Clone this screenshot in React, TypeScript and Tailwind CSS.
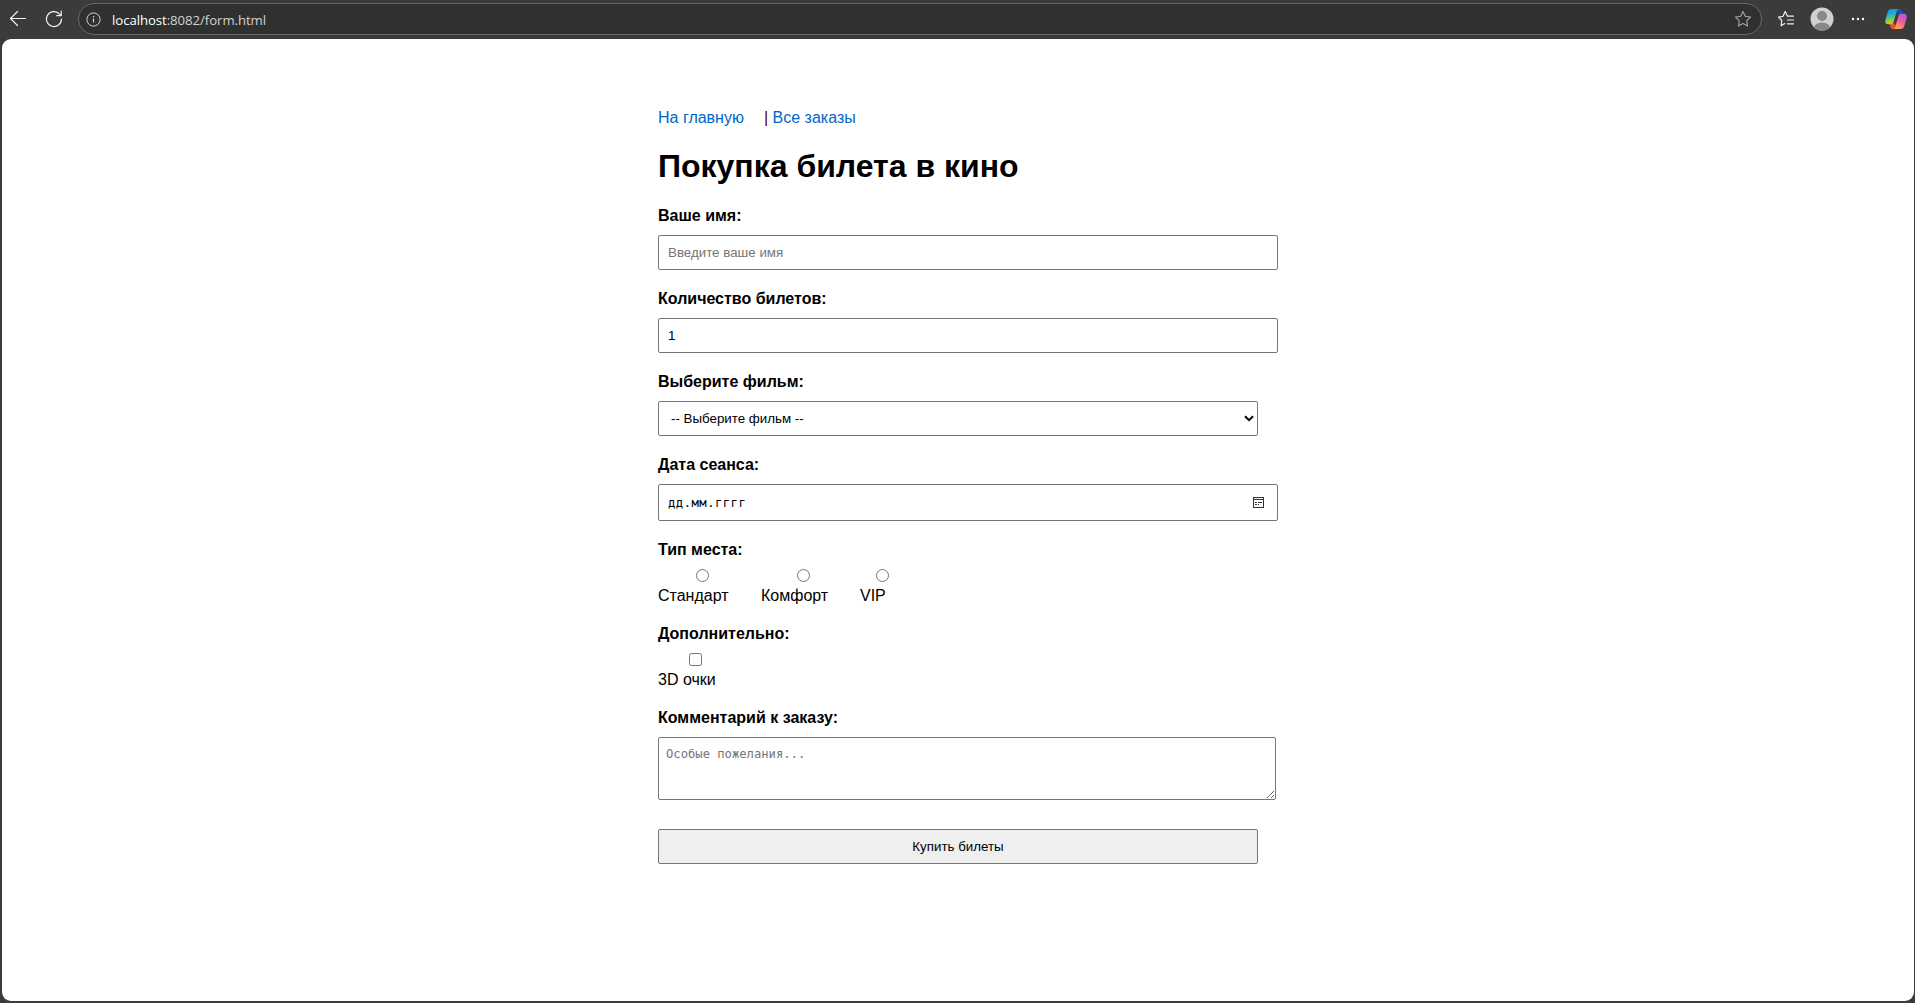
import type { ReactNode } from "react";

const inputBox =
  "block h-[35px] w-[620px] appearance-none rounded-[2px] border border-[#767676] bg-white px-[9px] text-[13.333px] text-black outline-none placeholder:text-[#757575]";

function Field({ label, children, className = "mb-5" }: { label: string; children: ReactNode; className?: string }) {
  return (
    <div className={className}>
      <div className="mb-2.5 h-[18px] font-bold">{label}</div>
      {children}
    </div>
  );
}

function Choice({ text, type, indent, className = "" }: { text: string; type: "radio" | "checkbox"; indent: string; className?: string }) {
  const shape = type === "radio" ? "rounded-full" : "rounded-[2.5px]";
  return (
    <label className={`flex flex-col gap-[5px] ${className}`}>
      <span className={`flex ${indent}`}>
        <input type={type} name="option" className={`size-[13px] appearance-none border border-[#767676] bg-white ${shape}`} />
      </span>
      <span className="h-[18px] whitespace-nowrap">{text}</span>
    </label>
  );
}

function CopilotIcon() {
  return (
    <svg width="24" height="24" viewBox="0 0 24 24" className="shrink-0">
      <defs>
        <linearGradient id="cpLeft" x1="0.3" y1="0" x2="0.5" y2="1">
          <stop offset="0" stopColor="#1c8de8" />
          <stop offset="0.4" stopColor="#25b5c4" />
          <stop offset="0.72" stopColor="#8ccb3f" />
          <stop offset="1" stopColor="#f2c21c" />
        </linearGradient>
        <linearGradient id="cpRight" x1="0.8" y1="0" x2="0.3" y2="1">
          <stop offset="0" stopColor="#a55bea" />
          <stop offset="0.45" stopColor="#ee5a9b" />
          <stop offset="1" stopColor="#ffa04f" />
        </linearGradient>
      </defs>
      <path d="M12 2h4c1.500 0 2 .8 2.400 2l1 3.500H14z" fill="#174fc0" />
      <path d="M12 22H9c-1.500 0-2.200-.8-2.600-2l-.8-3.500H11z" fill="#e8502f" />
      <path d="M7.500 2H15c-1.200 0-1.900 1-2.300 2.300L9.600 15c-.5 1.500-1.400 2.300-3 2.300H4.200C1.800 17.300.7 15.500 1.300 13L3.700 5C4.300 3 5.500 2 7.500 2z" fill="url(#cpLeft)" />
      <path d="M16.500 22H9c1.200 0 1.900-1 2.300-2.300L14.400 9c.5-1.500 1.400-2.300 3-2.300h2.400c2.400 0 3.500 1.800 2.900 4.300L20.300 19c-.6 2-1.800 3-3.800 3z" fill="url(#cpRight)" />
    </svg>
  );
}

function BrowserBar() {
  return (
    <header className="flex h-[39px] shrink-0 items-start bg-[#3b3b3b] text-white">
      <svg className="mt-[10px] ml-[9px] shrink-0" width="18" height="18" viewBox="0 0 18 18" fill="none" stroke="#f0f0f0" strokeWidth="1.2" strokeLinecap="round" strokeLinejoin="round">
        <path d="M16.500 8.500H1.500M8.500 1.500l-7 7 7 7" />
      </svg>
      <svg className="mt-[10px] ml-[18px] shrink-0" width="18" height="18" viewBox="0 0 18 18" fill="none" stroke="#f0f0f0" strokeWidth="1.2" strokeLinecap="round" strokeLinejoin="round">
        <path d="M16.500 9A7.500 7.500 0 1 1 14.800 4.300L16 5.500M16.200 1.200v4.500h-4.500" />
      </svg>
      <div className="mt-[3px] ml-[15px] flex h-8 w-[1684px] shrink-0 items-center rounded-full border border-[#676767] bg-[#303030] pl-[7px]">
        <svg width="15" height="15" viewBox="0 0 15 15" fill="none" stroke="#d0d0d0" className="shrink-0">
          <circle cx="7.500" cy="7.500" r="6.600" />
          <path d="M7.500 6.500v4" strokeWidth="1.200" />
          <path d="M7.500 4v1.300" strokeWidth="1.300" />
        </svg>
        <div className="mt-0.5 ml-[11px] h-[18px] w-[160px] font-['Open_Sans',sans-serif] text-[13.2px] leading-[18px] tracking-[-0.06px] whitespace-nowrap text-white">
          localhost<span className="text-[#d2d2d2]">:8082/form.html</span>
        </div>
        <svg className="mr-[9px] ml-auto shrink-0" width="18" height="18" viewBox="0 0 18 18" fill="none" stroke="#a5a5a5" strokeWidth="1.1" strokeLinejoin="round">
          <path d="M9 1.500l2.300 4.800 5.200.7-3.800 3.700.9 5.300L9 13.500 4.400 16l.9-5.300L1.500 7l5.200-.7z" />
        </svg>
      </div>
      <svg className="mt-[10px] ml-[15px] shrink-0" width="18" height="18" viewBox="0 0 18 18" fill="none" stroke="#f0f0f0" strokeWidth="1.2" strokeLinejoin="round" strokeLinecap="round">
        <path d="M10.500 6.200L8.200 1.500 6 6.300 1.500 7l3.300 3.500-.7 5.300 3.700-2.300M10.500 6.200h6M10.500 10h6M10.500 13.800h6" />
      </svg>
      <svg className="mt-[7px] ml-[15px] shrink-0" width="24" height="24" viewBox="0 0 24 24">
        <clipPath id="avatar">
          <circle cx="12" cy="12" r="11.500" />
        </clipPath>
        <g clipPath="url(#avatar)">
          <rect width="24" height="24" fill="#d2d0ce" />
          <circle cx="12" cy="9" r="5" fill="#8a8886" />
          <ellipse cx="12" cy="21" rx="8" ry="5.500" fill="#8a8886" />
        </g>
      </svg>
      <svg className="mt-[17px] ml-[17px] shrink-0" width="14" height="4" viewBox="0 0 14 4" fill="#fff">
        <circle cx="2" cy="2" r="1.200" />
        <circle cx="7" cy="2" r="1.200" />
        <circle cx="12" cy="2" r="1.200" />
      </svg>
      <div className="mt-[7px] ml-[19px]">
        <CopilotIcon />
      </div>
    </header>
  );
}

export default function App() {
  return (
    <div className="flex h-[1003px] w-[1915px] flex-col overflow-hidden bg-[#3b3b3b] pb-0.5">
      <BrowserBar />
      <main className="mr-px ml-0.5 flex-1 rounded-[9px] bg-white pt-[70px] pl-[656px] font-['Liberation_Sans',Arial,sans-serif] text-base leading-[18px] text-black">
        <nav className="flex h-[18px] whitespace-pre">
          <a className="mr-5 text-[#0066cc]">На главную</a>
          <span className="text-[#5c0000]">| </span>
          <a className="text-[#0066cc]">Все заказы</a>
        </nav>
        <h1 className="mt-[21px] mb-[23px] h-9 text-[32px] leading-9 font-bold">Покупка билета в кино</h1>
        <form>
          <Field label="Ваше имя:">
            <input className={inputBox} placeholder="Введите ваше имя" />
          </Field>
          <Field label="Количество билетов:">
            <input className={inputBox} defaultValue="1" />
          </Field>
          <Field label="Выберите фильм:">
            <div className="flex h-[35px] w-[600px] items-center justify-between rounded-[2px] border border-[#767676] pr-[3px] pl-3 text-[13.333px]">
              <span>-- Выберите фильм --</span>
              <svg width="10" height="7" viewBox="0 0 10 7" fill="none" stroke="#000" strokeWidth="2">
                <path d="M1 1.200l4 4 4-4" />
              </svg>
            </div>
          </Field>
          <Field label="Дата сеанса:">
            <div className="flex h-[37px] w-[620px] items-center justify-between rounded-[2px] border border-[#767676] pr-3 pl-[9px] font-['DejaVu_Sans_Mono',monospace] text-[12.18px]">
              <span className="tracking-[0.5px]">дд.мм.гггг</span>
              <svg width="12" height="13" viewBox="0 0 12 13" fill="none" stroke="#333" shapeRendering="crispEdges">
                <rect x="0.500" y="1.500" width="10" height="10" />
                <path d="M1 3.500h10M5 6.500h4M2 6.500h2M2 8.500h2M5 8.500h1" />
              </svg>
            </div>
          </Field>
          <Field label="Тип места:">
            <div className="flex">
              <Choice text="Стандарт" type="radio" indent="pl-[37.5px]" className="w-[103px]" />
              <Choice text="Комфорт" type="radio" indent="pl-9" className="w-[99px]" />
              <Choice text="VIP" type="radio" indent="pl-4" />
            </div>
          </Field>
          <Field label="Дополнительно:">
            <Choice text="3D очки" type="checkbox" indent="pl-[31px]" />
          </Field>
          <Field label="Комментарий к заказу:" className="mb-[29px]">
            <textarea
              className="block h-[63px] w-[618px] resize rounded-[2px] border border-[#767676] px-[7px] py-2 font-['DejaVu_Sans_Mono',monospace] text-[12.18px] leading-4 outline-none placeholder:text-[#757575]"
              placeholder="Особые пожелания..."
            />
          </Field>
          <button type="button" className="block h-[35px] w-[600px] rounded-[2px] border border-[#767676] bg-[#efefef] text-[13.333px]">
            Купить билеты
          </button>
        </form>
      </main>
    </div>
  );
}
